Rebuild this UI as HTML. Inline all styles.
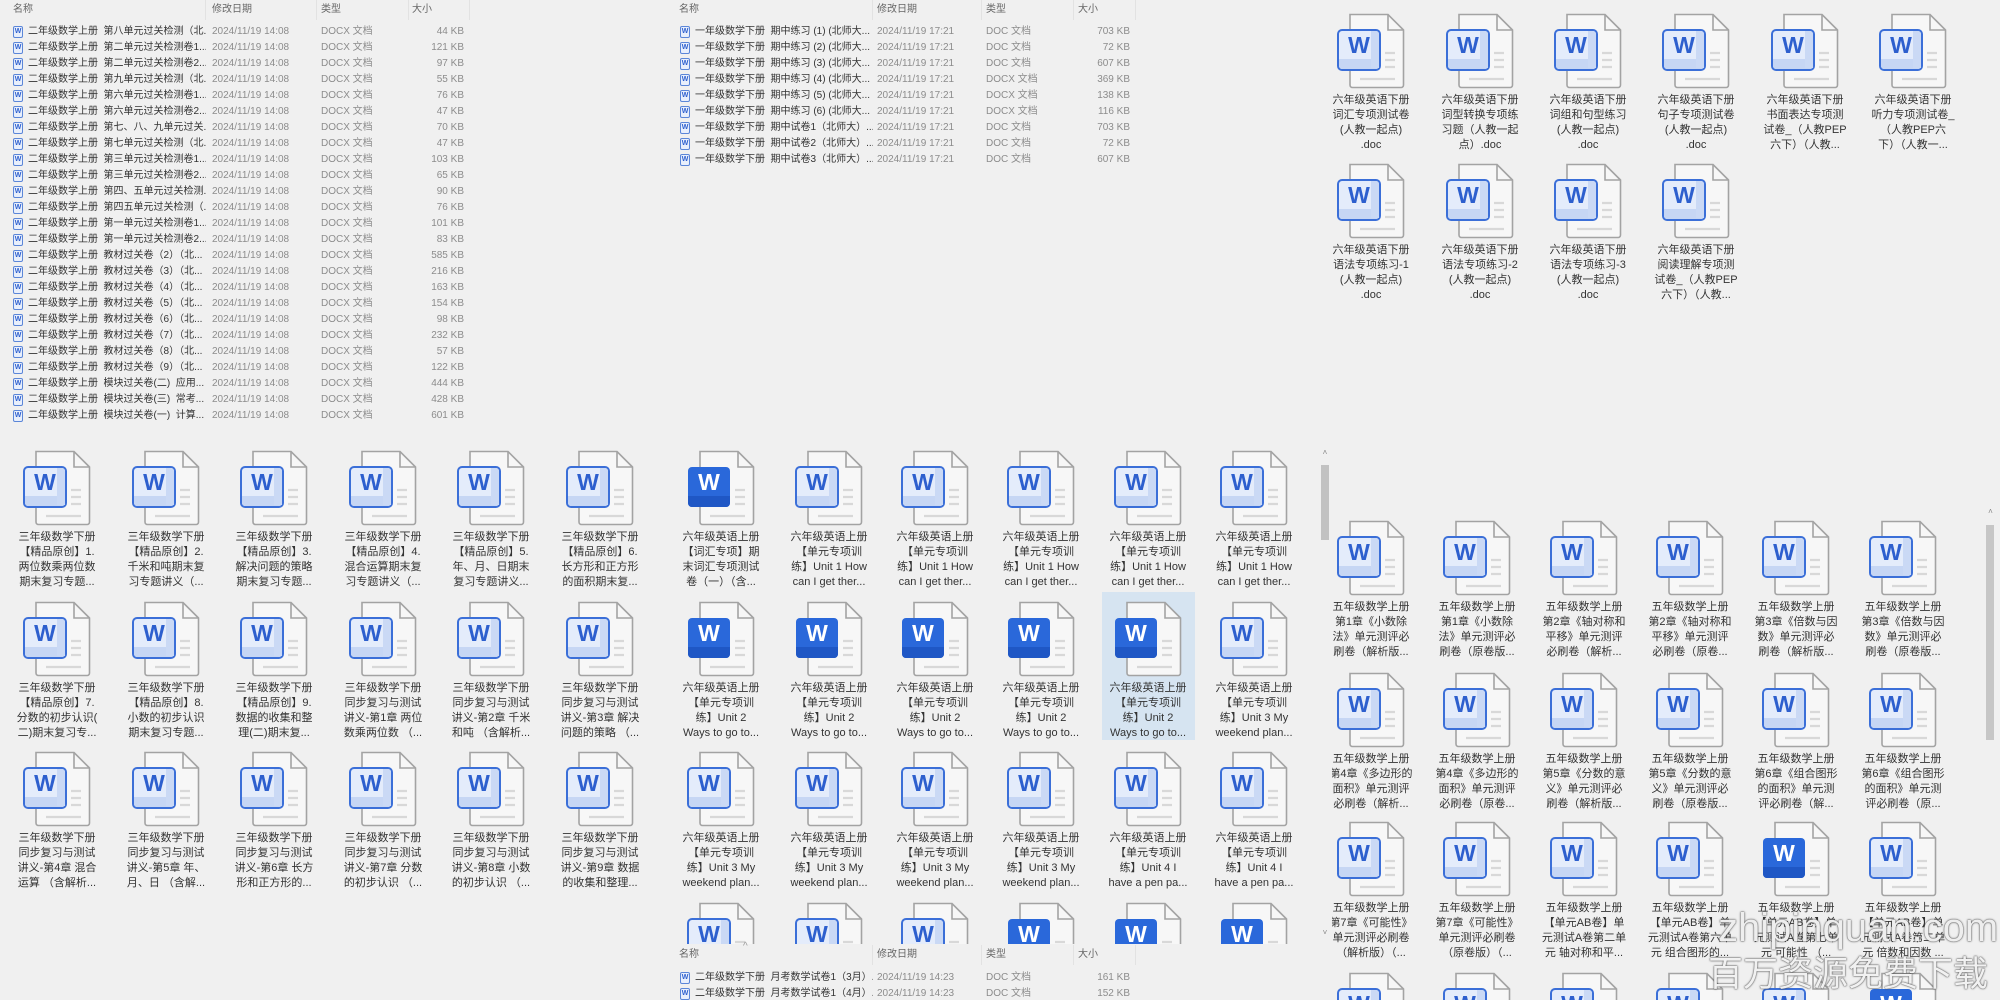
<!DOCTYPE html>
<html style="width:2000px;height:1000px;overflow:hidden"><head><meta charset="utf-8">
<style>
*{margin:0;padding:0;box-sizing:border-box}
body{width:2000px;height:1000px;background:#f0f0f0;position:relative;overflow:hidden;font-family:"Liberation Sans","Noto Sans CJK SC",sans-serif}
.c{position:absolute;left:0;top:0;width:2000px;height:1000px;overflow:hidden}
.it{position:absolute;width:108px;height:150px}
.it svg{position:absolute;left:19px;top:0}
.it b{position:absolute;left:21px;top:17px;width:42px;text-align:center;font:bold 23px/30px "Liberation Sans",sans-serif;color:#2d5fce}
.it.d b{color:#fff}
.lb{position:absolute;top:80px;left:-6px;width:120px;text-align:center;font-size:11px;line-height:15px;color:#333;white-space:nowrap}
.r{position:absolute;height:16px;line-height:16px;font-size:10px;white-space:nowrap;overflow:hidden}
.n{color:#333;width:178px}.g{color:#8c8c8c}
.h{position:absolute;font-size:10px;color:#666;line-height:16px}
.fi{position:absolute;width:10px;height:12px;border:1px solid #5b86d8;border-radius:2px;background:#e8effc;font:bold 7px/10px "Liberation Sans";color:#2d5fce;text-align:center}
.sep{position:absolute;width:1px;height:20px;background:#e2e2e2}
</style></head><body>
<svg width="0" height="0" style="position:absolute">
<symbol id="f" viewBox="0 0 70 76">
<path d="M14 1.5H52L67.5 17V72a2.5 2.5 0 0 1-2.5 2.5H16.5a2.5 2.5 0 0 1-2.5-2.5Z" fill="#f7f7f7" stroke="#a3a3a3" stroke-width="1.6"/>
<path d="M52 1.5V17H67.5" fill="none" stroke="#a3a3a3" stroke-width="1.6"/>
<path d="M49 40H59M49 47H59M49 54H59M24 66H59" stroke="#d8d8d8" stroke-width="2.2"/>
</symbol>
<symbol id="l" viewBox="0 0 70 76">
<use href="#f"/>
<rect x="2" y="17" width="42" height="40" rx="4" fill="#e4ecfb" stroke="#3b6fd8" stroke-width="2"/>
<path d="M3 46H43V53a3 3 0 0 1-3 3H6a3 3 0 0 1-3-3Z" fill="#c6d6f4"/>
<path d="M35 18H40a3 3 0 0 1 3 3V55H35Z" fill="#cad9f5"/>
</symbol>
<symbol id="k" viewBox="0 0 70 76">
<use href="#f"/>
<rect x="2" y="17" width="42" height="40" rx="4" fill="#2a68da"/>
<path d="M2 46H44V53a4 4 0 0 1-4 4H6a4 4 0 0 1-4-4Z" fill="#1f57c5"/>
</symbol>
</svg>

<div class="h" style="left:13px;top:2px">名称</div><div class="h" style="left:105px;top:-7px;color:#999">^</div>
<div class="h" style="left:212px;top:2px">修改日期</div><div class="h" style="left:321px;top:2px">类型</div><div class="h" style="left:412px;top:2px">大小</div>
<div class="sep" style="left:205px;top:0"></div><div class="sep" style="left:316px;top:0"></div><div class="sep" style="left:408px;top:0"></div><div class="sep" style="left:469px;top:0"></div>
<div class="h" style="left:679px;top:2px">名称</div><div class="h" style="left:771px;top:-7px;color:#999">^</div>
<div class="h" style="left:877px;top:2px">修改日期</div><div class="h" style="left:986px;top:2px">类型</div><div class="h" style="left:1078px;top:2px">大小</div>
<div class="sep" style="left:872px;top:0"></div><div class="sep" style="left:981px;top:0"></div><div class="sep" style="left:1073px;top:0"></div><div class="sep" style="left:1135px;top:0"></div>

<div class="c">
<div class="fi" style="left:13px;top:26px">W</div><div class="r n" style="left:28px;top:24px">二年级数学上册&nbsp; 第八单元过关检测（北...</div><div class="r g" style="left:212px;top:24px">2024/11/19 14:08</div><div class="r g" style="left:321px;top:24px">DOCX 文档</div><div class="r g" style="left:400px;top:24px;width:64px;text-align:right">44 KB</div>
<div class="fi" style="left:13px;top:42px">W</div><div class="r n" style="left:28px;top:40px">二年级数学上册&nbsp; 第二单元过关检测卷1...</div><div class="r g" style="left:212px;top:40px">2024/11/19 14:08</div><div class="r g" style="left:321px;top:40px">DOCX 文档</div><div class="r g" style="left:400px;top:40px;width:64px;text-align:right">121 KB</div>
<div class="fi" style="left:13px;top:58px">W</div><div class="r n" style="left:28px;top:56px">二年级数学上册&nbsp; 第二单元过关检测卷2...</div><div class="r g" style="left:212px;top:56px">2024/11/19 14:08</div><div class="r g" style="left:321px;top:56px">DOCX 文档</div><div class="r g" style="left:400px;top:56px;width:64px;text-align:right">97 KB</div>
<div class="fi" style="left:13px;top:74px">W</div><div class="r n" style="left:28px;top:72px">二年级数学上册&nbsp; 第九单元过关检测（北...</div><div class="r g" style="left:212px;top:72px">2024/11/19 14:08</div><div class="r g" style="left:321px;top:72px">DOCX 文档</div><div class="r g" style="left:400px;top:72px;width:64px;text-align:right">55 KB</div>
<div class="fi" style="left:13px;top:90px">W</div><div class="r n" style="left:28px;top:88px">二年级数学上册&nbsp; 第六单元过关检测卷1...</div><div class="r g" style="left:212px;top:88px">2024/11/19 14:08</div><div class="r g" style="left:321px;top:88px">DOCX 文档</div><div class="r g" style="left:400px;top:88px;width:64px;text-align:right">76 KB</div>
<div class="fi" style="left:13px;top:106px">W</div><div class="r n" style="left:28px;top:104px">二年级数学上册&nbsp; 第六单元过关检测卷2...</div><div class="r g" style="left:212px;top:104px">2024/11/19 14:08</div><div class="r g" style="left:321px;top:104px">DOCX 文档</div><div class="r g" style="left:400px;top:104px;width:64px;text-align:right">47 KB</div>
<div class="fi" style="left:13px;top:122px">W</div><div class="r n" style="left:28px;top:120px">二年级数学上册&nbsp; 第七、八、九单元过关...</div><div class="r g" style="left:212px;top:120px">2024/11/19 14:08</div><div class="r g" style="left:321px;top:120px">DOCX 文档</div><div class="r g" style="left:400px;top:120px;width:64px;text-align:right">70 KB</div>
<div class="fi" style="left:13px;top:138px">W</div><div class="r n" style="left:28px;top:136px">二年级数学上册&nbsp; 第七单元过关检测（北...</div><div class="r g" style="left:212px;top:136px">2024/11/19 14:08</div><div class="r g" style="left:321px;top:136px">DOCX 文档</div><div class="r g" style="left:400px;top:136px;width:64px;text-align:right">47 KB</div>
<div class="fi" style="left:13px;top:154px">W</div><div class="r n" style="left:28px;top:152px">二年级数学上册&nbsp; 第三单元过关检测卷1...</div><div class="r g" style="left:212px;top:152px">2024/11/19 14:08</div><div class="r g" style="left:321px;top:152px">DOCX 文档</div><div class="r g" style="left:400px;top:152px;width:64px;text-align:right">103 KB</div>
<div class="fi" style="left:13px;top:170px">W</div><div class="r n" style="left:28px;top:168px">二年级数学上册&nbsp; 第三单元过关检测卷2...</div><div class="r g" style="left:212px;top:168px">2024/11/19 14:08</div><div class="r g" style="left:321px;top:168px">DOCX 文档</div><div class="r g" style="left:400px;top:168px;width:64px;text-align:right">65 KB</div>
<div class="fi" style="left:13px;top:186px">W</div><div class="r n" style="left:28px;top:184px">二年级数学上册&nbsp; 第四、五单元过关检测...</div><div class="r g" style="left:212px;top:184px">2024/11/19 14:08</div><div class="r g" style="left:321px;top:184px">DOCX 文档</div><div class="r g" style="left:400px;top:184px;width:64px;text-align:right">90 KB</div>
<div class="fi" style="left:13px;top:202px">W</div><div class="r n" style="left:28px;top:200px">二年级数学上册&nbsp; 第四五单元过关检测（...</div><div class="r g" style="left:212px;top:200px">2024/11/19 14:08</div><div class="r g" style="left:321px;top:200px">DOCX 文档</div><div class="r g" style="left:400px;top:200px;width:64px;text-align:right">76 KB</div>
<div class="fi" style="left:13px;top:218px">W</div><div class="r n" style="left:28px;top:216px">二年级数学上册&nbsp; 第一单元过关检测卷1...</div><div class="r g" style="left:212px;top:216px">2024/11/19 14:08</div><div class="r g" style="left:321px;top:216px">DOCX 文档</div><div class="r g" style="left:400px;top:216px;width:64px;text-align:right">101 KB</div>
<div class="fi" style="left:13px;top:234px">W</div><div class="r n" style="left:28px;top:232px">二年级数学上册&nbsp; 第一单元过关检测卷2...</div><div class="r g" style="left:212px;top:232px">2024/11/19 14:08</div><div class="r g" style="left:321px;top:232px">DOCX 文档</div><div class="r g" style="left:400px;top:232px;width:64px;text-align:right">83 KB</div>
<div class="fi" style="left:13px;top:250px">W</div><div class="r n" style="left:28px;top:248px">二年级数学上册&nbsp; 教材过关卷（2）（北...</div><div class="r g" style="left:212px;top:248px">2024/11/19 14:08</div><div class="r g" style="left:321px;top:248px">DOCX 文档</div><div class="r g" style="left:400px;top:248px;width:64px;text-align:right">585 KB</div>
<div class="fi" style="left:13px;top:266px">W</div><div class="r n" style="left:28px;top:264px">二年级数学上册&nbsp; 教材过关卷（3）（北...</div><div class="r g" style="left:212px;top:264px">2024/11/19 14:08</div><div class="r g" style="left:321px;top:264px">DOCX 文档</div><div class="r g" style="left:400px;top:264px;width:64px;text-align:right">216 KB</div>
<div class="fi" style="left:13px;top:282px">W</div><div class="r n" style="left:28px;top:280px">二年级数学上册&nbsp; 教材过关卷（4）（北...</div><div class="r g" style="left:212px;top:280px">2024/11/19 14:08</div><div class="r g" style="left:321px;top:280px">DOCX 文档</div><div class="r g" style="left:400px;top:280px;width:64px;text-align:right">163 KB</div>
<div class="fi" style="left:13px;top:298px">W</div><div class="r n" style="left:28px;top:296px">二年级数学上册&nbsp; 教材过关卷（5）（北...</div><div class="r g" style="left:212px;top:296px">2024/11/19 14:08</div><div class="r g" style="left:321px;top:296px">DOCX 文档</div><div class="r g" style="left:400px;top:296px;width:64px;text-align:right">154 KB</div>
<div class="fi" style="left:13px;top:314px">W</div><div class="r n" style="left:28px;top:312px">二年级数学上册&nbsp; 教材过关卷（6）（北...</div><div class="r g" style="left:212px;top:312px">2024/11/19 14:08</div><div class="r g" style="left:321px;top:312px">DOCX 文档</div><div class="r g" style="left:400px;top:312px;width:64px;text-align:right">98 KB</div>
<div class="fi" style="left:13px;top:330px">W</div><div class="r n" style="left:28px;top:328px">二年级数学上册&nbsp; 教材过关卷（7）（北...</div><div class="r g" style="left:212px;top:328px">2024/11/19 14:08</div><div class="r g" style="left:321px;top:328px">DOCX 文档</div><div class="r g" style="left:400px;top:328px;width:64px;text-align:right">232 KB</div>
<div class="fi" style="left:13px;top:346px">W</div><div class="r n" style="left:28px;top:344px">二年级数学上册&nbsp; 教材过关卷（8）（北...</div><div class="r g" style="left:212px;top:344px">2024/11/19 14:08</div><div class="r g" style="left:321px;top:344px">DOCX 文档</div><div class="r g" style="left:400px;top:344px;width:64px;text-align:right">57 KB</div>
<div class="fi" style="left:13px;top:362px">W</div><div class="r n" style="left:28px;top:360px">二年级数学上册&nbsp; 教材过关卷（9）（北...</div><div class="r g" style="left:212px;top:360px">2024/11/19 14:08</div><div class="r g" style="left:321px;top:360px">DOCX 文档</div><div class="r g" style="left:400px;top:360px;width:64px;text-align:right">122 KB</div>
<div class="fi" style="left:13px;top:378px">W</div><div class="r n" style="left:28px;top:376px">二年级数学上册&nbsp; 模块过关卷(二)&nbsp; 应用...</div><div class="r g" style="left:212px;top:376px">2024/11/19 14:08</div><div class="r g" style="left:321px;top:376px">DOCX 文档</div><div class="r g" style="left:400px;top:376px;width:64px;text-align:right">444 KB</div>
<div class="fi" style="left:13px;top:394px">W</div><div class="r n" style="left:28px;top:392px">二年级数学上册&nbsp; 模块过关卷(三)&nbsp; 常考...</div><div class="r g" style="left:212px;top:392px">2024/11/19 14:08</div><div class="r g" style="left:321px;top:392px">DOCX 文档</div><div class="r g" style="left:400px;top:392px;width:64px;text-align:right">428 KB</div>
<div class="fi" style="left:13px;top:410px">W</div><div class="r n" style="left:28px;top:408px">二年级数学上册&nbsp; 模块过关卷(一)&nbsp; 计算...</div><div class="r g" style="left:212px;top:408px">2024/11/19 14:08</div><div class="r g" style="left:321px;top:408px">DOCX 文档</div><div class="r g" style="left:400px;top:408px;width:64px;text-align:right">601 KB</div>

<div class="fi" style="left:680px;top:26px">W</div><div class="r n" style="left:695px;top:24px">一年级数学下册&nbsp; 期中练习 (1) (北师大...</div><div class="r g" style="left:877px;top:24px">2024/11/19 17:21</div><div class="r g" style="left:986px;top:24px">DOC 文档</div><div class="r g" style="left:1066px;top:24px;width:64px;text-align:right">703 KB</div>
<div class="fi" style="left:680px;top:42px">W</div><div class="r n" style="left:695px;top:40px">一年级数学下册&nbsp; 期中练习 (2) (北师大...</div><div class="r g" style="left:877px;top:40px">2024/11/19 17:21</div><div class="r g" style="left:986px;top:40px">DOC 文档</div><div class="r g" style="left:1066px;top:40px;width:64px;text-align:right">72 KB</div>
<div class="fi" style="left:680px;top:58px">W</div><div class="r n" style="left:695px;top:56px">一年级数学下册&nbsp; 期中练习 (3) (北师大...</div><div class="r g" style="left:877px;top:56px">2024/11/19 17:21</div><div class="r g" style="left:986px;top:56px">DOC 文档</div><div class="r g" style="left:1066px;top:56px;width:64px;text-align:right">607 KB</div>
<div class="fi" style="left:680px;top:74px">W</div><div class="r n" style="left:695px;top:72px">一年级数学下册&nbsp; 期中练习 (4) (北师大...</div><div class="r g" style="left:877px;top:72px">2024/11/19 17:21</div><div class="r g" style="left:986px;top:72px">DOCX 文档</div><div class="r g" style="left:1066px;top:72px;width:64px;text-align:right">369 KB</div>
<div class="fi" style="left:680px;top:90px">W</div><div class="r n" style="left:695px;top:88px">一年级数学下册&nbsp; 期中练习 (5) (北师大...</div><div class="r g" style="left:877px;top:88px">2024/11/19 17:21</div><div class="r g" style="left:986px;top:88px">DOCX 文档</div><div class="r g" style="left:1066px;top:88px;width:64px;text-align:right">138 KB</div>
<div class="fi" style="left:680px;top:106px">W</div><div class="r n" style="left:695px;top:104px">一年级数学下册&nbsp; 期中练习 (6) (北师大...</div><div class="r g" style="left:877px;top:104px">2024/11/19 17:21</div><div class="r g" style="left:986px;top:104px">DOCX 文档</div><div class="r g" style="left:1066px;top:104px;width:64px;text-align:right">116 KB</div>
<div class="fi" style="left:680px;top:122px">W</div><div class="r n" style="left:695px;top:120px">一年级数学下册&nbsp; 期中试卷1（北师大）....</div><div class="r g" style="left:877px;top:120px">2024/11/19 17:21</div><div class="r g" style="left:986px;top:120px">DOC 文档</div><div class="r g" style="left:1066px;top:120px;width:64px;text-align:right">703 KB</div>
<div class="fi" style="left:680px;top:138px">W</div><div class="r n" style="left:695px;top:136px">一年级数学下册&nbsp; 期中试卷2（北师大）....</div><div class="r g" style="left:877px;top:136px">2024/11/19 17:21</div><div class="r g" style="left:986px;top:136px">DOC 文档</div><div class="r g" style="left:1066px;top:136px;width:64px;text-align:right">72 KB</div>
<div class="fi" style="left:680px;top:154px">W</div><div class="r n" style="left:695px;top:152px">一年级数学下册&nbsp; 期中试卷3（北师大）....</div><div class="r g" style="left:877px;top:152px">2024/11/19 17:21</div><div class="r g" style="left:986px;top:152px">DOC 文档</div><div class="r g" style="left:1066px;top:152px;width:64px;text-align:right">607 KB</div>
</div>

<div class="c">
<div class="it" style="left:1317px;top:13px"><svg width="70" height="76"><use href="#l"/></svg><b>W</b><div class="lb">六年级英语下册<br>词汇专项测试卷<br>(人教一起点)<br>.doc</div></div>
<div class="it" style="left:1426px;top:13px"><svg width="70" height="76"><use href="#l"/></svg><b>W</b><div class="lb">六年级英语下册<br>词型转换专项练<br>习题（人教一起<br>点）.doc</div></div>
<div class="it" style="left:1534px;top:13px"><svg width="70" height="76"><use href="#l"/></svg><b>W</b><div class="lb">六年级英语下册<br>词组和句型练习<br>(人教一起点)<br>.doc</div></div>
<div class="it" style="left:1642px;top:13px"><svg width="70" height="76"><use href="#l"/></svg><b>W</b><div class="lb">六年级英语下册<br>句子专项测试卷<br>(人教一起点)<br>.doc</div></div>
<div class="it" style="left:1751px;top:13px"><svg width="70" height="76"><use href="#l"/></svg><b>W</b><div class="lb">六年级英语下册<br>书面表达专项测<br>试卷_（人教PEP<br>六下）（人教...</div></div>
<div class="it" style="left:1859px;top:13px"><svg width="70" height="76"><use href="#l"/></svg><b>W</b><div class="lb">六年级英语下册<br>听力专项测试卷_<br>（人教PEP六<br>下）（人教一...</div></div>
<div class="it" style="left:1317px;top:163px"><svg width="70" height="76"><use href="#l"/></svg><b>W</b><div class="lb">六年级英语下册<br>语法专项练习-1<br>(人教一起点)<br>.doc</div></div>
<div class="it" style="left:1426px;top:163px"><svg width="70" height="76"><use href="#l"/></svg><b>W</b><div class="lb">六年级英语下册<br>语法专项练习-2<br>(人教一起点)<br>.doc</div></div>
<div class="it" style="left:1534px;top:163px"><svg width="70" height="76"><use href="#l"/></svg><b>W</b><div class="lb">六年级英语下册<br>语法专项练习-3<br>(人教一起点)<br>.doc</div></div>
<div class="it" style="left:1642px;top:163px"><svg width="70" height="76"><use href="#l"/></svg><b>W</b><div class="lb">六年级英语下册<br>阅读理解专项测<br>试卷_（人教PEP<br>六下）（人教...</div></div>
</div>

<div class="c">
<div class="it" style="left:3px;top:450px"><svg width="70" height="76"><use href="#l"/></svg><b>W</b><div class="lb">三年级数学下册<br>【精品原创】1.<br>两位数乘两位数<br>期末复习专题...</div></div>
<div class="it" style="left:112px;top:450px"><svg width="70" height="76"><use href="#l"/></svg><b>W</b><div class="lb">三年级数学下册<br>【精品原创】2.<br>千米和吨期末复<br>习专题讲义（...</div></div>
<div class="it" style="left:220px;top:450px"><svg width="70" height="76"><use href="#l"/></svg><b>W</b><div class="lb">三年级数学下册<br>【精品原创】3.<br>解决问题的策略<br>期末复习专题...</div></div>
<div class="it" style="left:329px;top:450px"><svg width="70" height="76"><use href="#l"/></svg><b>W</b><div class="lb">三年级数学下册<br>【精品原创】4.<br>混合运算期末复<br>习专题讲义（...</div></div>
<div class="it" style="left:437px;top:450px"><svg width="70" height="76"><use href="#l"/></svg><b>W</b><div class="lb">三年级数学下册<br>【精品原创】5.<br>年、月、日期末<br>复习专题讲义...</div></div>
<div class="it" style="left:546px;top:450px"><svg width="70" height="76"><use href="#l"/></svg><b>W</b><div class="lb">三年级数学下册<br>【精品原创】6.<br>长方形和正方形<br>的面积期末复...</div></div>
<div class="it" style="left:3px;top:601px"><svg width="70" height="76"><use href="#l"/></svg><b>W</b><div class="lb">三年级数学下册<br>【精品原创】7.<br>分数的初步认识(<br>二)期末复习专...</div></div>
<div class="it" style="left:112px;top:601px"><svg width="70" height="76"><use href="#l"/></svg><b>W</b><div class="lb">三年级数学下册<br>【精品原创】8.<br>小数的初步认识<br>期末复习专题...</div></div>
<div class="it" style="left:220px;top:601px"><svg width="70" height="76"><use href="#l"/></svg><b>W</b><div class="lb">三年级数学下册<br>【精品原创】9.<br>数据的收集和整<br>理(二)期末复...</div></div>
<div class="it" style="left:329px;top:601px"><svg width="70" height="76"><use href="#l"/></svg><b>W</b><div class="lb">三年级数学下册<br>同步复习与测试<br>讲义-第1章 两位<br>数乘两位数 （...</div></div>
<div class="it" style="left:437px;top:601px"><svg width="70" height="76"><use href="#l"/></svg><b>W</b><div class="lb">三年级数学下册<br>同步复习与测试<br>讲义-第2章 千米<br>和吨 （含解析...</div></div>
<div class="it" style="left:546px;top:601px"><svg width="70" height="76"><use href="#l"/></svg><b>W</b><div class="lb">三年级数学下册<br>同步复习与测试<br>讲义-第3章 解决<br>问题的策略 （...</div></div>
<div class="it" style="left:3px;top:751px"><svg width="70" height="76"><use href="#l"/></svg><b>W</b><div class="lb">三年级数学下册<br>同步复习与测试<br>讲义-第4章 混合<br>运算 （含解析...</div></div>
<div class="it" style="left:112px;top:751px"><svg width="70" height="76"><use href="#l"/></svg><b>W</b><div class="lb">三年级数学下册<br>同步复习与测试<br>讲义-第5章 年、<br>月、日 （含解...</div></div>
<div class="it" style="left:220px;top:751px"><svg width="70" height="76"><use href="#l"/></svg><b>W</b><div class="lb">三年级数学下册<br>同步复习与测试<br>讲义-第6章 长方<br>形和正方形的...</div></div>
<div class="it" style="left:329px;top:751px"><svg width="70" height="76"><use href="#l"/></svg><b>W</b><div class="lb">三年级数学下册<br>同步复习与测试<br>讲义-第7章 分数<br>的初步认识 （...</div></div>
<div class="it" style="left:437px;top:751px"><svg width="70" height="76"><use href="#l"/></svg><b>W</b><div class="lb">三年级数学下册<br>同步复习与测试<br>讲义-第8章 小数<br>的初步认识 （...</div></div>
<div class="it" style="left:546px;top:751px"><svg width="70" height="76"><use href="#l"/></svg><b>W</b><div class="lb">三年级数学下册<br>同步复习与测试<br>讲义-第9章 数据<br>的收集和整理...</div></div>
</div>

<div style="position:absolute;left:670px;top:440px;width:662px;height:504px;overflow:hidden">
<div style="position:absolute;left:0;top:0;width:2000px;height:1000px;transform:translate(-670px,-440px)">
<div style="position:absolute;left:1102px;top:592px;width:93px;height:148px;background:#d6e4f1"></div>
<div class="it d" style="left:667px;top:450px"><svg width="70" height="76"><use href="#k"/></svg><b>W</b><div class="lb">六年级英语上册<br>【词汇专项】期<br>末词汇专项测试<br>卷（一）（含...</div></div>
<div class="it" style="left:775px;top:450px"><svg width="70" height="76"><use href="#l"/></svg><b>W</b><div class="lb">六年级英语上册<br>【单元专项训<br>练】Unit 1 How<br>can I get ther...</div></div>
<div class="it" style="left:881px;top:450px"><svg width="70" height="76"><use href="#l"/></svg><b>W</b><div class="lb">六年级英语上册<br>【单元专项训<br>练】Unit 1 How<br>can I get ther...</div></div>
<div class="it" style="left:987px;top:450px"><svg width="70" height="76"><use href="#l"/></svg><b>W</b><div class="lb">六年级英语上册<br>【单元专项训<br>练】Unit 1 How<br>can I get ther...</div></div>
<div class="it" style="left:1094px;top:450px"><svg width="70" height="76"><use href="#l"/></svg><b>W</b><div class="lb">六年级英语上册<br>【单元专项训<br>练】Unit 1 How<br>can I get ther...</div></div>
<div class="it" style="left:1200px;top:450px"><svg width="70" height="76"><use href="#l"/></svg><b>W</b><div class="lb">六年级英语上册<br>【单元专项训<br>练】Unit 1 How<br>can I get ther...</div></div>
<div class="it d" style="left:667px;top:601px"><svg width="70" height="76"><use href="#k"/></svg><b>W</b><div class="lb">六年级英语上册<br>【单元专项训<br>练】Unit 2<br>Ways to go to...</div></div>
<div class="it d" style="left:775px;top:601px"><svg width="70" height="76"><use href="#k"/></svg><b>W</b><div class="lb">六年级英语上册<br>【单元专项训<br>练】Unit 2<br>Ways to go to...</div></div>
<div class="it d" style="left:881px;top:601px"><svg width="70" height="76"><use href="#k"/></svg><b>W</b><div class="lb">六年级英语上册<br>【单元专项训<br>练】Unit 2<br>Ways to go to...</div></div>
<div class="it d" style="left:987px;top:601px"><svg width="70" height="76"><use href="#k"/></svg><b>W</b><div class="lb">六年级英语上册<br>【单元专项训<br>练】Unit 2<br>Ways to go to...</div></div>
<div class="it d" style="left:1094px;top:601px"><svg width="70" height="76"><use href="#k"/></svg><b>W</b><div class="lb">六年级英语上册<br>【单元专项训<br>练】Unit 2<br>Ways to go to...</div></div>
<div class="it" style="left:1200px;top:601px"><svg width="70" height="76"><use href="#l"/></svg><b>W</b><div class="lb">六年级英语上册<br>【单元专项训<br>练】Unit 3 My<br>weekend plan...</div></div>
<div class="it" style="left:667px;top:751px"><svg width="70" height="76"><use href="#l"/></svg><b>W</b><div class="lb">六年级英语上册<br>【单元专项训<br>练】Unit 3 My<br>weekend plan...</div></div>
<div class="it" style="left:775px;top:751px"><svg width="70" height="76"><use href="#l"/></svg><b>W</b><div class="lb">六年级英语上册<br>【单元专项训<br>练】Unit 3 My<br>weekend plan...</div></div>
<div class="it" style="left:881px;top:751px"><svg width="70" height="76"><use href="#l"/></svg><b>W</b><div class="lb">六年级英语上册<br>【单元专项训<br>练】Unit 3 My<br>weekend plan...</div></div>
<div class="it" style="left:987px;top:751px"><svg width="70" height="76"><use href="#l"/></svg><b>W</b><div class="lb">六年级英语上册<br>【单元专项训<br>练】Unit 3 My<br>weekend plan...</div></div>
<div class="it" style="left:1094px;top:751px"><svg width="70" height="76"><use href="#l"/></svg><b>W</b><div class="lb">六年级英语上册<br>【单元专项训<br>练】Unit 4 I<br>have a pen pa...</div></div>
<div class="it" style="left:1200px;top:751px"><svg width="70" height="76"><use href="#l"/></svg><b>W</b><div class="lb">六年级英语上册<br>【单元专项训<br>练】Unit 4 I<br>have a pen pa...</div></div>
<div class="it" style="left:667px;top:902px"><svg width="70" height="76"><use href="#l"/></svg><b>W</b></div>
<div class="it" style="left:775px;top:902px"><svg width="70" height="76"><use href="#l"/></svg><b>W</b></div>
<div class="it" style="left:881px;top:902px"><svg width="70" height="76"><use href="#l"/></svg><b>W</b></div>
<div class="it d" style="left:987px;top:902px"><svg width="70" height="76"><use href="#k"/></svg><b>W</b></div>
<div class="it d" style="left:1094px;top:902px"><svg width="70" height="76"><use href="#k"/></svg><b>W</b></div>
<div class="it d" style="left:1200px;top:902px"><svg width="70" height="76"><use href="#k"/></svg><b>W</b></div>
</div></div>
<div style="position:absolute;left:1320px;top:450px;width:10px;height:494px;background:#f0f0f0"></div>
<div style="position:absolute;left:1321px;top:465px;width:8px;height:75px;background:#c2c2c2"></div>
<div style="position:absolute;left:1320px;top:448px;width:10px;font-size:8px;color:#888;text-align:center">˄</div>
<div style="position:absolute;left:1320px;top:928px;width:10px;font-size:8px;color:#888;text-align:center">˅</div>

<div class="h" style="left:679px;top:947px">名称</div><div class="h" style="left:743px;top:939px;color:#999">^</div>
<div class="h" style="left:877px;top:947px">修改日期</div><div class="h" style="left:986px;top:947px">类型</div><div class="h" style="left:1078px;top:947px">大小</div>
<div class="sep" style="left:872px;top:945px"></div><div class="sep" style="left:981px;top:945px"></div><div class="sep" style="left:1073px;top:945px"></div><div class="sep" style="left:1135px;top:945px"></div>
<div class="fi" style="left:680px;top:972px">W</div><div class="r n" style="left:695px;top:970px">二年级数学下册&nbsp; 月考数学试卷1（3月）...</div><div class="r g" style="left:877px;top:970px">2024/11/19 14:23</div><div class="r g" style="left:986px;top:970px">DOC 文档</div><div class="r g" style="left:1066px;top:970px;width:64px;text-align:right">161 KB</div>
<div class="fi" style="left:680px;top:988px">W</div><div class="r n" style="left:695px;top:986px">二年级数学下册&nbsp; 月考数学试卷1（4月）...</div><div class="r g" style="left:877px;top:986px">2024/11/19 14:23</div><div class="r g" style="left:986px;top:986px">DOC 文档</div><div class="r g" style="left:1066px;top:986px;width:64px;text-align:right">152 KB</div>

<div style="position:absolute;left:1332px;top:440px;width:652px;height:560px;overflow:hidden">
<div style="position:absolute;left:0;top:0;width:2000px;height:1000px;transform:translate(-1332px,-440px)">
<div class="it" style="left:1317px;top:520px"><svg width="70" height="76"><use href="#l"/></svg><b>W</b><div class="lb">五年级数学上册<br>第1章《小数除<br>法》单元测评必<br>刷卷（解析版...</div></div>
<div class="it" style="left:1423px;top:520px"><svg width="70" height="76"><use href="#l"/></svg><b>W</b><div class="lb">五年级数学上册<br>第1章《小数除<br>法》单元测评必<br>刷卷（原卷版...</div></div>
<div class="it" style="left:1530px;top:520px"><svg width="70" height="76"><use href="#l"/></svg><b>W</b><div class="lb">五年级数学上册<br>第2章《轴对称和<br>平移》单元测评<br>必刷卷（解析...</div></div>
<div class="it" style="left:1636px;top:520px"><svg width="70" height="76"><use href="#l"/></svg><b>W</b><div class="lb">五年级数学上册<br>第2章《轴对称和<br>平移》单元测评<br>必刷卷（原卷...</div></div>
<div class="it" style="left:1742px;top:520px"><svg width="70" height="76"><use href="#l"/></svg><b>W</b><div class="lb">五年级数学上册<br>第3章《倍数与因<br>数》单元测评必<br>刷卷（解析版...</div></div>
<div class="it" style="left:1849px;top:520px"><svg width="70" height="76"><use href="#l"/></svg><b>W</b><div class="lb">五年级数学上册<br>第3章《倍数与因<br>数》单元测评必<br>刷卷（原卷版...</div></div>
<div class="it" style="left:1317px;top:672px"><svg width="70" height="76"><use href="#l"/></svg><b>W</b><div class="lb">五年级数学上册<br>第4章《多边形的<br>面积》单元测评<br>必刷卷（解析...</div></div>
<div class="it" style="left:1423px;top:672px"><svg width="70" height="76"><use href="#l"/></svg><b>W</b><div class="lb">五年级数学上册<br>第4章《多边形的<br>面积》单元测评<br>必刷卷（原卷...</div></div>
<div class="it" style="left:1530px;top:672px"><svg width="70" height="76"><use href="#l"/></svg><b>W</b><div class="lb">五年级数学上册<br>第5章《分数的意<br>义》单元测评必<br>刷卷（解析版...</div></div>
<div class="it" style="left:1636px;top:672px"><svg width="70" height="76"><use href="#l"/></svg><b>W</b><div class="lb">五年级数学上册<br>第5章《分数的意<br>义》单元测评必<br>刷卷（原卷版...</div></div>
<div class="it" style="left:1742px;top:672px"><svg width="70" height="76"><use href="#l"/></svg><b>W</b><div class="lb">五年级数学上册<br>第6章《组合图形<br>的面积》单元测<br>评必刷卷（解...</div></div>
<div class="it" style="left:1849px;top:672px"><svg width="70" height="76"><use href="#l"/></svg><b>W</b><div class="lb">五年级数学上册<br>第6章《组合图形<br>的面积》单元测<br>评必刷卷（原...</div></div>
<div class="it" style="left:1317px;top:821px"><svg width="70" height="76"><use href="#l"/></svg><b>W</b><div class="lb">五年级数学上册<br>第7章《可能性》<br>单元测评必刷卷<br>（解析版）（...</div></div>
<div class="it" style="left:1423px;top:821px"><svg width="70" height="76"><use href="#l"/></svg><b>W</b><div class="lb">五年级数学上册<br>第7章《可能性》<br>单元测评必刷卷<br>（原卷版）（...</div></div>
<div class="it" style="left:1530px;top:821px"><svg width="70" height="76"><use href="#l"/></svg><b>W</b><div class="lb">五年级数学上册<br>【单元AB卷】单<br>元测试A卷第二单<br>元 轴对称和平...</div></div>
<div class="it" style="left:1636px;top:821px"><svg width="70" height="76"><use href="#l"/></svg><b>W</b><div class="lb">五年级数学上册<br>【单元AB卷】单<br>元测试A卷第六单<br>元 组合图形的...</div></div>
<div class="it d" style="left:1742px;top:821px"><svg width="70" height="76"><use href="#k"/></svg><b>W</b><div class="lb">五年级数学上册<br>【单元AB卷】单<br>元测试A卷第七单<br>元 可能性 （...</div></div>
<div class="it" style="left:1849px;top:821px"><svg width="70" height="76"><use href="#l"/></svg><b>W</b><div class="lb">五年级数学上册<br>【单元AB卷】单<br>元测试A卷第二单<br>元 倍数和因数 ...</div></div>
<div class="it" style="left:1317px;top:972px"><svg width="70" height="76"><use href="#l"/></svg><b>W</b></div>
<div class="it" style="left:1423px;top:972px"><svg width="70" height="76"><use href="#l"/></svg><b>W</b></div>
<div class="it" style="left:1530px;top:972px"><svg width="70" height="76"><use href="#l"/></svg><b>W</b></div>
<div class="it" style="left:1636px;top:972px"><svg width="70" height="76"><use href="#l"/></svg><b>W</b></div>
<div class="it" style="left:1742px;top:972px"><svg width="70" height="76"><use href="#l"/></svg><b>W</b></div>
<div class="it d" style="left:1849px;top:972px"><svg width="70" height="76"><use href="#k"/></svg><b>W</b></div>
</div></div>
<div style="position:absolute;left:1985px;top:510px;width:11px;height:434px;background:#f0f0f0"></div>
<div style="position:absolute;left:1986px;top:525px;width:8px;height:215px;background:#c6c6c6"></div>
<div style="position:absolute;left:1985px;top:507px;width:11px;font-size:8px;color:#888;text-align:center">˄</div>

<div style="position:absolute;left:1718px;top:906px;font:40px/44px 'Liberation Sans',sans-serif;color:rgba(255,255,255,.9);text-shadow:0 0 2px #555,0 0 1px #333;white-space:nowrap">zhipinquan.com</div>
<div style="position:absolute;left:1708px;top:954px;font:35px/42px 'Liberation Sans','Noto Sans CJK SC',sans-serif;color:rgba(255,255,255,.92);text-shadow:0 0 2px #555,0 0 1px #333;white-space:nowrap">百万资源免费下载</div>
</body></html>
